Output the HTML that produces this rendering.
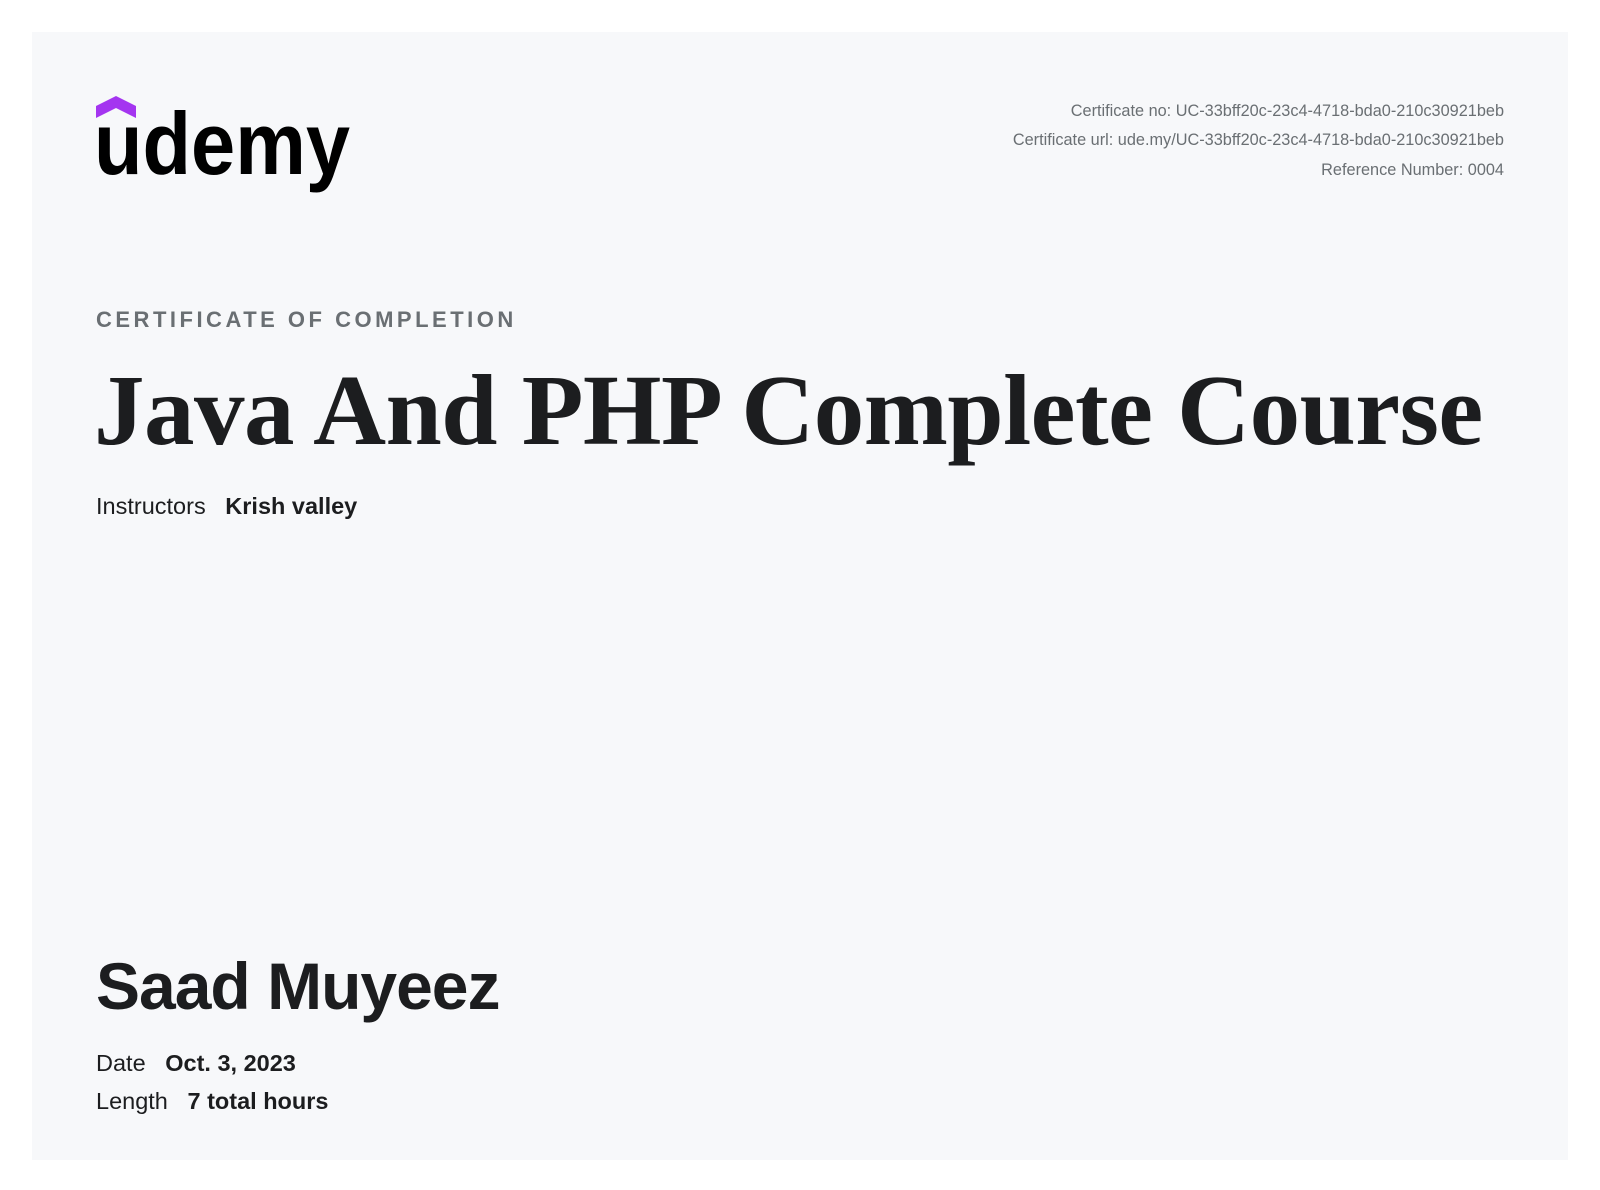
<!DOCTYPE html>
<html><head><meta charset="utf-8"><style>
html,body{margin:0;padding:0;background:#fff;width:1600px;height:1190px;overflow:hidden}
.card{position:absolute;left:32px;top:32px;width:1536px;height:1128px;background:#f7f8fa}
.t{position:absolute;white-space:nowrap;line-height:1;font-family:"Liberation Sans",sans-serif;color:#1c1d1f}
.meta{right:96px;font-size:16.3px;color:#6a6f73;text-align:right}
</style></head><body>
<div class="card"></div>
<svg style="position:absolute;left:92px;top:94px" width="270" height="104" viewBox="0 0 270 104">
<polygon points="4,12 24,2 44,12 44,24 24,14 4,24" fill="#a435f0"/>
<text x="2" y="80" font-family="Liberation Sans, sans-serif" font-weight="bold" font-size="88" textLength="256" lengthAdjust="spacingAndGlyphs" fill="#000">udemy</text>
</svg>
<div class="t meta" style="top:103px">Certificate no: UC-33bff20c-23c4-4718-bda0-210c30921beb</div>
<div class="t meta" style="top:132px">Certificate url: ude.my/UC-33bff20c-23c4-4718-bda0-210c30921beb</div>
<div class="t meta" style="top:162px">Reference Number: 0004</div>
<div class="t" style="left:96px;top:309px;font-size:22px;font-weight:bold;letter-spacing:3.5px;color:#6a6f73">CERTIFICATE OF COMPLETION</div>
<div class="t" style="left:94px;top:360px;font-family:'Liberation Serif',serif;font-weight:bold;font-size:101px;letter-spacing:-0.5px">Java And PHP Complete Course</div>
<div class="t" style="left:96px;top:495px;font-size:23.5px">Instructors&nbsp;&nbsp;&nbsp;<b>Krish valley</b></div>
<div class="t" style="left:96px;top:953px;font-size:66px;font-weight:bold;letter-spacing:-1px">Saad Muyeez</div>
<div class="t" style="left:96px;top:1052px;font-size:23.5px">Date&nbsp;&nbsp;&nbsp;<b>Oct. 3, 2023</b></div>
<div class="t" style="left:96px;top:1090px;font-size:23.5px">Length&nbsp;&nbsp;&nbsp;<b>7 total hours</b></div>
</body></html>
